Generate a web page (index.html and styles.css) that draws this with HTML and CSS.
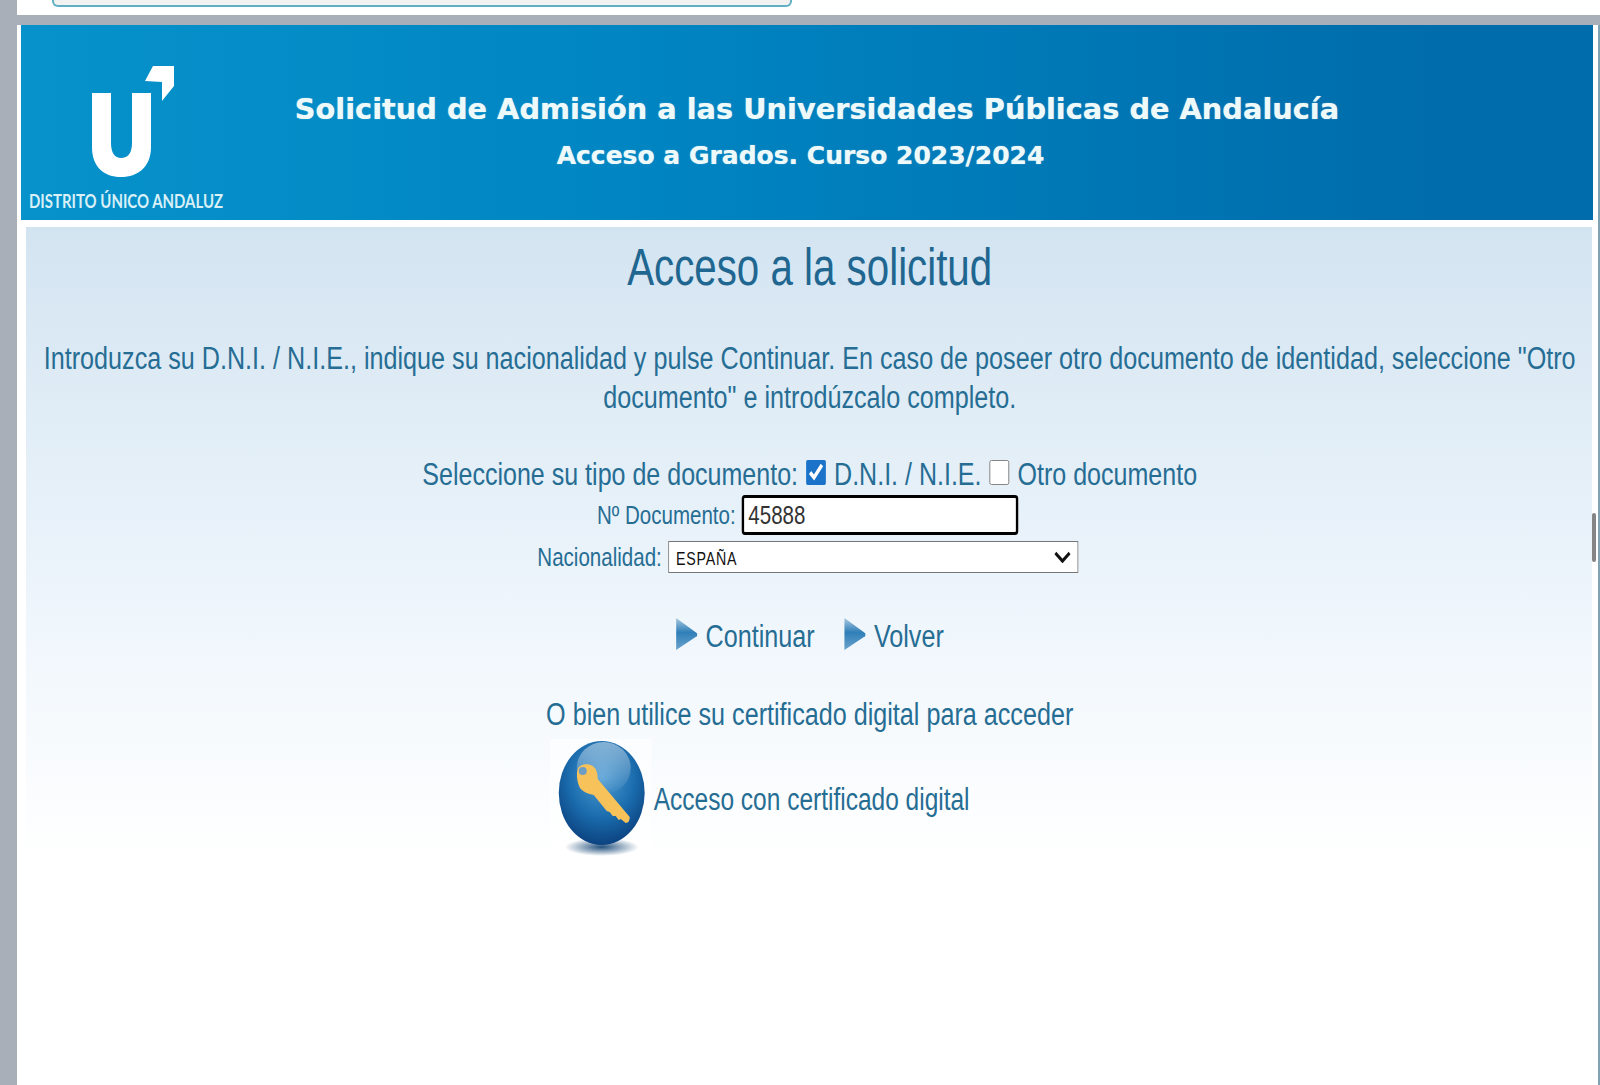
FILE: index.html
```html
<!DOCTYPE html>
<html>
<head>
    <title>Acceso a la solicitud</title>
    <link rel="stylesheet" href="styles.css">
</head>
<body>
    <div class="page">
        <div class="top-strip">
            <div class="search-box"></div>
        </div>
        <div class="browser-bar"></div>
        <div class="content">
            <header class="banner">
                <div class="logo">
                    <svg class="logo-mark" width="90" height="120" viewBox="0 0 90 120">
                        <path d="M2 33V87C2 107 14 117 31 117C48 117 61 107 61 87V33H42V83C42 93 38 98 31 98C25 98 21 93 21 83V33Z" fill="#fff"/>
                        <path d="M55 21L63 6H84V26L72 41V22Z" fill="#fff"/>
                    </svg>
                    <span class="logo-text">DISTRITO ÚNICO ANDALUZ</span>
                </div>
                <div class="banner-titles">
                    <h2>Solicitud de Admisión a las Universidades Públicas de Andalucía</h2>
                    <h3>Acceso a Grados. Curso 2023/2024</h3>
                </div>
            </header>
            <main class="panel">
                <div class="panel-inner">
                    <h1>Acceso a la solicitud</h1>
                    <p class="intro">Introduzca su D.N.I. / N.I.E., indique su nacionalidad y pulse Continuar. En caso de poseer otro documento de identidad, seleccione "Otro documento" e introdúzcalo completo.</p>
                    <div class="doc-type">
                        Seleccione su tipo de documento:
                        <input type="checkbox" checked> D.N.I. / N.I.E.
                        <input type="checkbox"> Otro documento
                    </div>
                    <div class="field-row">
                        <label>Nº Documento:</label>
                        <input type="text" class="doc-input" value="45888">
                    </div>
                    <div class="field-row nation-row">
                        <label>Nacionalidad:</label>
                        <div class="select-wrap">
                            <select class="nation-select"><option>ESPAÑA</option></select>
                            <svg class="select-arrow" width="22" height="12" viewBox="0 0 22 12"><path d="M2 2L11 10L20 2" fill="none" stroke="#111" stroke-width="3.5"/></svg>
                        </div>
                    </div>
                    <div class="actions">
                        <a class="action">
                            <svg width="28" height="34" viewBox="0 0 28 32" preserveAspectRatio="none"><defs><linearGradient id="arrowA" x1="0" y1="0" x2="0" y2="1"><stop offset="0" stop-color="#a9c8e0"/><stop offset="0.45" stop-color="#2f7fb8"/><stop offset="1" stop-color="#6ba3cc"/></linearGradient></defs><path d="M1 1L27 15C28 16 28 17 27 18L1 31Z" fill="url(#arrowA)"/></svg>
                            Continuar
                        </a>
                        <a class="action">
                            <svg width="28" height="34" viewBox="0 0 28 32" preserveAspectRatio="none"><path d="M1 1L27 15C28 16 28 17 27 18L1 31Z" fill="url(#arrowA)"/></svg>
                            Volver
                        </a>
                    </div>
                    <p class="cert-hint">O bien utilice su certificado digital para acceder</p>
                    <div class="cert-row">
                        <svg class="cert-icon" width="129" height="122" viewBox="0 0 102 122" preserveAspectRatio="none">
                            <defs>
                                <radialGradient id="ball" cx="0.5" cy="0.35" r="0.7"><stop offset="0" stop-color="#4f9cd4"/><stop offset="0.55" stop-color="#1a6cad"/><stop offset="1" stop-color="#0a3b78"/></radialGradient>
                                <radialGradient id="shadow"><stop offset="0" stop-color="#24527e"/><stop offset="1" stop-color="#24527e" stop-opacity="0"/></radialGradient>
                                <linearGradient id="gloss" x1="0" y1="0" x2="0" y2="1"><stop offset="0" stop-color="#fff" stop-opacity="0.45"/><stop offset="1" stop-color="#fff" stop-opacity="0.02"/></linearGradient>
                            </defs>
                            <rect width="102" height="122" fill="#fff" opacity="0.5"/>
                            <ellipse cx="52" cy="108" rx="37" ry="9" fill="url(#shadow)"/>
                            <ellipse cx="52" cy="54" rx="43" ry="52" fill="url(#ball)"/>
                            <ellipse cx="54" cy="29" rx="27" ry="26" fill="url(#gloss)"/>
                            <path d="M28 30C30 25 38 24 43 27C47 30 48 35 48 40L80 78C80 81 79 84 76 84L71 80L69 81L66 77L63 77L60 73L57 72L44 56C38 55 34 53 31 50C28 46 26 36 28 30Z" fill="#f7c25a"/>
                            <circle cx="33" cy="32" r="4" fill="#6d9cc4"/>
                        </svg>
                        <span>Acceso con certificado digital</span>
                    </div>
                </div>
            </main>
            <div class="scroll-thumb"></div>
        </div>
    </div>
</body>
</html>
```

FILE: styles.css
```css
html, body {
    margin: 0;
    height: 100%;
    overflow: hidden;
}
body {
    background-color: #fff;
    font-family: "Liberation Sans", sans-serif;
    color: #266d94;
}
.page {
    height: 100%;
    margin-left: 17px;
    background-color: #fff;
    box-shadow: -17px 0 0 #a9afb9;
}
.top-strip {
    height: 15px;
    padding-left: 35px;
    box-sizing: border-box;
}
.search-box {
    width: 740px;
    height: 7px;
    box-sizing: border-box;
    border: 2px solid #5fb0c4;
    border-top: 0;
    border-radius: 0 0 6px 6px;
    background-color: #f2f2f2;
}
.browser-bar {
    height: 10px;
    background-color: #a9afb9;
}
.content {
    position: relative;
    height: 1060px;
    padding: 0 5px 0 4px;
    border-right: 2px solid #7fa3b3;
}
.scroll-thumb {
    position: absolute;
    right: 2px;
    top: 488px;
    width: 4px;
    height: 49px;
    border-radius: 2px;
    background-color: #858585;
}
.banner {
    display: flex;
    height: 195px;
    background: linear-gradient(to right, #0792cb, #0085c2 40%, #006cab 90%);
    color: #fff;
}
.logo {
    width: 240px;
    flex: none;
    position: relative;
}
.logo-mark {
    position: absolute;
    left: 69px;
    top: 35px;
}
.logo-text {
    position: absolute;
    left: 8px;
    top: 165px;
    font-family: "Lato", sans-serif;
    font-size: 18px;
    font-weight: 700;
    white-space: nowrap;
    color: #d9f0f7;
    transform: scaleX(.83);
    transform-origin: left;
}
.banner-titles {
    flex: 1;
    margin-left: -240px;
    text-align: center;
    font-family: "DejaVu Sans", sans-serif;
    text-shadow: 0 0 1px rgba(255,255,255,.7);
    color: #eef9f9;
}
.banner-titles h2 {
    margin: 67px 0 0;
    padding-left: 20px;
    font-size: 28.8px;
    line-height: 34px;
}
.banner-titles h3 {
    margin: 16px 0 0;
    padding-right: 13px;
    font-size: 25px;
    line-height: 28px;
}
.panel {
    margin: 7px 1px 0 5px;
    height: 634px;
    box-sizing: border-box;
    background: linear-gradient(to bottom, #d3e4f1, #eff6fc 62%, #fff);
}
/* the page in the reference is squeezed sideways, so is all of this block */
.panel-inner {
    width: 1984px;
    box-sizing: border-box;
    padding: 13px 10px 0;
    text-align: center;
    font-size: 31.85px;
    transform: scaleX(.79);
    transform-origin: left top;
}
.panel-inner h1 {
    margin: 0;
    font-size: 51px;
    font-weight: normal;
    line-height: 56px;
    color: #1f6690;
}
.intro {
    margin: 43px 0 0;
    line-height: 39px;
}
.doc-type {
    margin-top: 38px;
    margin-bottom: 1px;
    line-height: 39px;
    font-size: 31.7px;
}
.doc-type input {
    width: 26px;
    height: 25px;
    margin: 0 1px;
    accent-color: #1a73c9;
}
.field-row {
    display: flex;
    justify-content: center;
    align-items: center;
    gap: 8px;
    padding-right: 5px;
    font-size: 26px;
}
.doc-input {
    width: 350px;
    height: 40px;
    box-sizing: border-box;
    border: 3px solid #000;
    border-radius: 4px;
    padding: 0 5px;
    font-family: inherit;
    font-size: 26px;
    color: #333;
}
.nation-row {
    margin-top: 6px;
}
.select-wrap {
    position: relative;
    height: 32px;
}
.nation-select {
    appearance: none;
    display: block;
    width: 519px;
    height: 32px;
    padding: 3px 0 0 9px;
    border: 1px solid #767676;
    border-radius: 0;
    font-family: "Liberation Sans", sans-serif;
    font-size: 18px;
    letter-spacing: 1px;
    color: #111;
    background-color: #fff;
}
.select-arrow {
    position: absolute;
    right: 9px;
    top: 10px;
    pointer-events: none;
}
.actions {
    display: flex;
    justify-content: center;
    gap: 37px;
    margin-top: 44px;
}
.action {
    display: flex;
    align-items: center;
    gap: 10px;
}
.action svg {
    margin-bottom: 5px;
}
.cert-hint {
    margin: 39px 0 0;
    line-height: 39px;
}
.cert-row {
    display: flex;
    justify-content: center;
    align-items: center;
    gap: 3px;
    margin-top: 5px;
    padding-right: 127px;
    font-size: 31px;
}
```
